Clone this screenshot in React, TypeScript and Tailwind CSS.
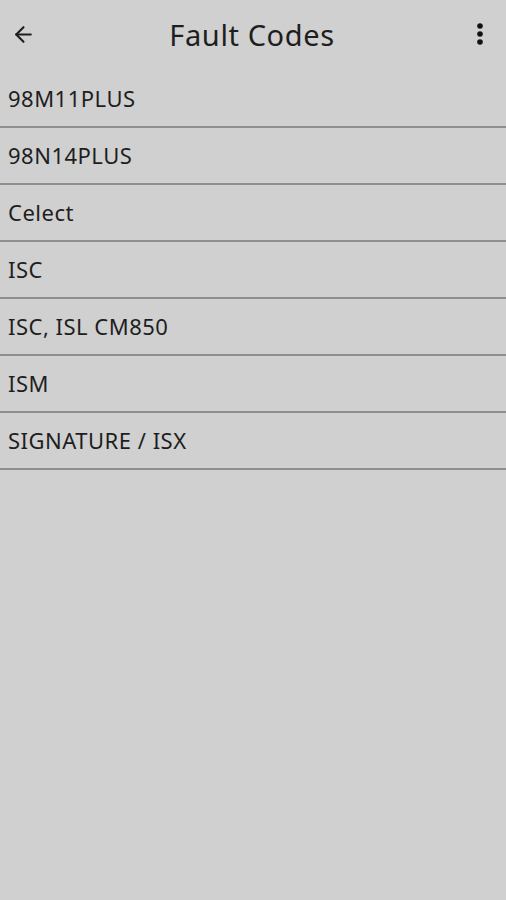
import { ArrowLeft } from "lucide-react";

const codes = [
  "98M11PLUS",
  "98N14PLUS",
  "Celect",
  "ISC",
  "ISC, ISL CM850",
  "ISM",
  "SIGNATURE / ISX",
];

export default function App() {
  return (
    <div
      className="min-h-[900px] w-full bg-[#d0d0d0] text-[#1e1e1e]"
      style={{ fontFamily: '"Noto Sans", "Open Sans", sans-serif' }}
    >
      {/* top bar */}
      <header className="flex h-[71px] items-center justify-between px-[11px] pb-[3px]">
        <ArrowLeft className="h-[25px] w-[25px] text-[#1e1e1e]" strokeWidth={2} />
        <h1 className="text-[29px] leading-none tracking-[0.6px]">Fault Codes</h1>
        <svg width="24" height="24" viewBox="0 0 24 24" className="mr-[3px]">
          <circle cx="12" cy="4" r="2.8" fill="#111" />
          <circle cx="12" cy="12" r="2.8" fill="#111" />
          <circle cx="12" cy="20" r="2.8" fill="#111" />
        </svg>
      </header>

      <ul>
        {codes.map((c) => (
          <li
            key={c}
            className="flex h-[57px] items-center border-b-2 border-[#8e8e8e] pl-[8px] text-[22px] tracking-[0.5px]"
          >
            {c}
          </li>
        ))}
      </ul>
    </div>
  );
}
